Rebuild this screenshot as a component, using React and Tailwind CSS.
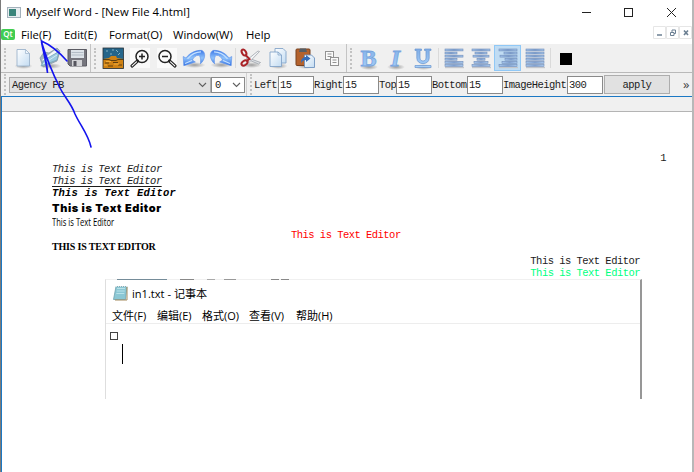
import React from "react";

const MONO = "font-['Liberation_Mono','Noto_Sans_CJK_SC',monospace] text-[10.5px] tracking-[-0.55px] whitespace-pre text-[#1c1c1c]";
const DOC = "font-['Liberation_Mono','Noto_Sans_CJK_SC',monospace] text-[10.5px] tracking-[-0.53px] whitespace-pre";
const UI = "font-['Open_Sans','Noto_Sans_CJK_SC',sans-serif] whitespace-pre";

function Handle() {
  return (
    <div className="flex w-2 shrink-0 items-center justify-center">
      <div className="h-[21px] w-0 border-l-2 border-dotted border-[#c2c2c2]" />
    </div>
  );
}

function Slot({ children, active }) {
  return (
    <div
      className={
        "flex w-[27px] shrink-0 items-center justify-center " +
        (active ? "my-[1px] border border-[#90c8f6] bg-[#c0dcf3]" : "")
      }
    >
      {children}
    </div>
  );
}

function Icon({ children }) {
  return (
    <svg width="24" height="24" viewBox="0 0 24 24" fill="none" className="shrink-0">
      {children}
    </svg>
  );
}

function Defs() {
  return (
    <svg width="0" height="0" className="absolute">
      <defs>
        <linearGradient id="page" x1="0" y1="0" x2="1" y2="1">
          <stop offset="0" stopColor="#ffffff" />
          <stop offset="1" stopColor="#c3dcf2" />
        </linearGradient>
        <linearGradient id="arrow" x1="0" y1="0" x2="0" y2="1">
          <stop offset="0" stopColor="#3a78e8" />
          <stop offset="0.5" stopColor="#8fc2fb" />
          <stop offset="1" stopColor="#2f6fe4" />
        </linearGradient>
        <linearGradient id="letter" x1="0" y1="0" x2="0" y2="1">
          <stop offset="0" stopColor="#7fade6" />
          <stop offset="1" stopColor="#a9d1fa" />
        </linearGradient>
        <linearGradient id="bar" x1="0" y1="0" x2="1" y2="0">
          <stop offset="0" stopColor="#a6c7ee" />
          <stop offset="0.5" stopColor="#7f9fce" />
          <stop offset="1" stopColor="#a9c9ee" />
        </linearGradient>
        <radialGradient id="shade">
          <stop offset="0" stopColor="#000" stopOpacity="0.35" />
          <stop offset="1" stopColor="#000" stopOpacity="0" />
        </radialGradient>
      </defs>
    </svg>
  );
}

function Shade({ cy = 20, rx = 9 }) {
  return <ellipse cx="12.5" cy={cy} rx={rx} ry="3" fill="url(#shade)" />;
}

function Zoom({ plus }) {
  return (
    <Icon>
      <rect x="2" y="2" width="20" height="20" fill="#fafafa" />
      <circle cx={plus ? 14 : 10} cy="10.5" r="6" stroke="#222" strokeWidth="1.5" />
      <path d={plus ? "M11 10.5h6M14 7.5v6" : "M7 10.5h6"} stroke="#222" strokeWidth="1.5" />
      <path
        d={plus ? "M9.5 15l-5.5 5" : "M14.5 15l5.5 5"}
        stroke="#222"
        strokeWidth="3.2"
        strokeLinecap="round"
      />
      <path
        d={plus ? "M8.5 15.9l-4.3 3.9" : "M15.5 15.9l4.3 3.9"}
        stroke="#fff"
        strokeWidth="1.1"
        strokeLinecap="round"
      />
    </Icon>
  );
}

function Arrow({ flip }) {
  return (
    <Icon>
      <Shade cy={19} rx={11} />
      <g transform={flip ? "translate(24 0) scale(-1 1)" : ""}>
        <path
          d="M1.2 10.5L4 12C8 6.5 14 4 20 4.4c4 2 3.5 9-1.6 13.4c.5-4 .2-8-2-8.5c-2.8 0-4.6 2-6 4.7l3 2L1.8 19.700z"
          fill="url(#arrow)"
          stroke="#5a8fe8"
          strokeWidth="0.6"
        />
        <path d="M5.5 12.8c4-4.8 8.5-6.9 13.5-6.9" stroke="#c4e0ff" strokeWidth="1.2" />
        <path d="M3 17.5l7-3" stroke="#c4e0ff" strokeWidth="1.2" />
      </g>
    </Icon>
  );
}

function Lines({ rows }) {
  return (
    <Icon>
      <rect x="3" y="21" width="19" height="1.2" fill="#c4c6ca" />
      {rows.map(([x, w], i) => (
        <rect
          key={i}
          x={x}
          y={3 + i * 3.1}
          width={w}
          height="1.9"
          fill="url(#bar)"
          stroke="#6f8cb9"
          strokeWidth="0.6"
        />
      ))}
    </Icon>
  );
}

const LEFT = [[3, 18], [3, 12], [3, 18], [3, 12], [3, 18], [3, 18]];
const CENTER = [[3, 18], [6, 12], [4, 16], [8, 8], [5, 14], [3, 18]];
const RIGHT = [[3, 18], [8, 13], [4, 17], [9, 12], [6, 15], [3, 18]];
const FULL = [[3, 18], [3, 18], [3, 18], [3, 18], [3, 18], [3, 18]];

function Divider() {
  return <div className="my-1 w-px shrink-0 bg-[#dadada]" />;
}

function Glyph({ children, className }) {
  return (
    <svg width="27" height="28" viewBox="0 0 27 28" fill="none" className="shrink-0">
      <ellipse cx="14" cy="23" rx="9" ry="3" fill="url(#shade)" />
      <text
        x="13.5"
        y="22"
        textAnchor="middle"
        fill="url(#letter)"
        stroke="#76a3de"
        strokeWidth="0.8"
        className={"font-['Liberation_Serif',serif] text-[24px] font-bold " + className}
      >
        {children}
      </text>
    </svg>
  );
}

function MainToolbar() {
  return (
    <div className="flex h-[29px] border-b border-[#b9b9b9] bg-[#f0f0f0]">
      <Handle />
      <Slot>
        <Icon>
          <Shade />
          <path d="M6 3.5h8.5l4 4V20H6z" fill="url(#page)" stroke="#9cb3cc" strokeWidth="0.9" />
          <path d="M14.5 3.5v4h4z" fill="#eef6fd" stroke="#9cb3cc" strokeWidth="0.7" />
        </Icon>
      </Slot>
      <Slot>
        <Icon>
          <Shade cy={20} rx={11} />
          <path d="M2 12l4-6 5 1 8-5 3 3-3 10-14 6z" fill="#a3b5bf" stroke="#7f95a1" strokeWidth="0.7" />
          <path d="M4 14L17 4l3 1L8 17z" fill="#f4f9fb" />
          <path d="M3 20l3-6L21 5.5l-2 8.5z" fill="#9ccbdf" stroke="#6f9fb4" strokeWidth="0.7" />
          <path d="M5 18l14-9" stroke="#d4ebf4" />
        </Icon>
      </Slot>
      <Slot>
        <Icon>
          <path d="M3 3.5h18.5V20H5l-2-2z" fill="#75757d" stroke="#5b5b63" />
          <rect x="6" y="4" width="13" height="8" fill="#dde3e9" />
          <path d="M6.5 6.5h12M6.5 9h12" stroke="#b3bcc6" />
          <rect x="7" y="14" width="10" height="6" fill="#d2d3d6" />
          <rect x="8.5" y="15" width="3" height="5" fill="#55555d" />
        </Icon>
      </Slot>
      <div className="w-px shrink-0 bg-[#c4c4c4]" />
      <Handle />
      <Slot>
        <Icon>
          <rect x="2" y="2" width="20.5" height="20.5" fill="#24658a" />
          <path d="M5 5h2M15 4l2 2M9 8h2M19 7l-2 2M12 3v2" stroke="#85b4c4" />
          <path d="M2 13l6-1 2-2h5l1 2 6.5 1v9.5H2z" fill="#cf8214" />
          <path d="M2 13.5h6l2 1h5l2-1h5.5M4 17h4M12 16.5h5M7 20h5M17 19h4" stroke="#61400f" />
          <path d="M5 15.5h5M13 18h5M3 19h3" stroke="#f1ad3c" />
          <rect x="2" y="2" width="20.5" height="20.5" stroke="#293239" strokeWidth="0.8" />
        </Icon>
      </Slot>
      <Slot><Zoom plus /></Slot>
      <Slot><Zoom /></Slot>
      <Slot><Arrow /></Slot>
      <Slot><Arrow flip /></Slot>
      <div className="flex w-[3px] shrink-0 justify-center"><Divider /></div>
      <Slot>
        <Icon>
          <Shade cy={19} rx={10} />
          <path d="M8 11.5L21.5 16.5l-2 1.5L7.5 13z" fill="#dce0e4" stroke="#949aa2" strokeWidth="0.7" />
          <path d="M8.5 13.5L19 5l1.5.5-10.5 11z" fill="#f3f5f7" stroke="#949aa2" strokeWidth="0.7" />
          <ellipse cx="5" cy="6.5" rx="2" ry="3.2" transform="rotate(-30 5 6.5)" stroke="#a92328" strokeWidth="2" />
          <ellipse cx="5.5" cy="17" rx="3.3" ry="2.2" transform="rotate(-35 5.5 17)" stroke="#a92328" strokeWidth="2" />
          <path d="M6.5 9l4 4-3 2" stroke="#a92328" strokeWidth="2" />
        </Icon>
      </Slot>
      <Slot>
        <Icon>
          <Shade />
          <path d="M9 2.5h8l3 3V17H9z" fill="url(#page)" stroke="#84a5c9" strokeWidth="0.9" />
          <path d="M4 6h8l3.5 3v11.5H4z" fill="url(#page)" stroke="#84a5c9" strokeWidth="0.9" />
          <path d="M12 6v3h3.5" stroke="#84a5c9" strokeWidth="0.8" />
        </Icon>
      </Slot>
      <Slot>
        <Icon>
          <Shade />
          <rect x="3" y="3" width="14" height="16.5" rx="1" fill="#b4622d" stroke="#784221" />
          <path d="M7 2.5h6l1 3.5H6z" fill="#555d65" />
          <path d="M11.5 9h7l3 3v9.5h-10z" fill="url(#page)" stroke="#6f94c0" strokeWidth="0.9" />
          <path d="M8 17c0-4 2-6 5-6V9l4.500 3.500L13 16v-2c-2 0-4 1-5 3z" fill="#356cb8" />
        </Icon>
      </Slot>
      <Slot>
        <Icon>
          <rect x="5.5" y="5.5" width="8" height="8" fill="#fafafa" stroke="#929292" />
          <path d="M7.5 8h4M7.5 10.5h4" stroke="#929292" />
          <rect x="10.5" y="11.5" width="8" height="8" fill="#fafafa" stroke="#929292" />
          <path d="M12.5 14h4M12.5 16.5h4" stroke="#929292" />
        </Icon>
      </Slot>
      <div className="flex w-0.5 shrink-0 justify-end">
        <div className="w-px bg-[#c4c4c4]" />
      </div>
      <Handle />
      <Slot><Glyph className="">B</Glyph></Slot>
      <Slot><Glyph className="italic">I</Glyph></Slot>
      <Slot>
        <Icon>
          <Shade cy={21} rx={9} />
          <path
            d="M4 3h6.5v1.5H9V12c0 4 6 4 6 0V4.5h-1.5V3H20v1.5h-1.8V12c0 7.5-12.4 7.5-12.4 0V4.5H4zM4 19.5h16v2H4z"
            fill="url(#letter)"
            stroke="#6c97d0"
            strokeWidth="0.7"
          />
        </Icon>
      </Slot>
      <div className="flex w-1 shrink-0 justify-center"><Divider /></div>
      <Slot><Lines rows={LEFT} /></Slot>
      <Slot><Lines rows={CENTER} /></Slot>
      <Slot active><Lines rows={RIGHT} /></Slot>
      <Slot><Lines rows={FULL} /></Slot>
      <div className="flex w-1 shrink-0 justify-center"><Divider /></div>
      <Slot><div className="mt-px h-3 w-3 bg-black" /></Slot>
    </div>
  );
}

function Chevron() {
  return (
    <svg width="9" height="6" viewBox="0 0 9 6" fill="none" className="shrink-0">
      <path d="M1 1l3.5 3.5L8 1" stroke="#606060" strokeWidth="1.1" />
    </svg>
  );
}

function Field({ label, value, labelWidth }) {
  return (
    <>
      <span className={MONO + " mt-[2px] shrink-0 " + labelWidth}>{label}</span>
      <div className={MONO + " flex h-[18px] w-9 shrink-0 items-center border border-[#8a8a8a] bg-white pt-0.5 pl-px"}>
        {value}
      </div>
    </>
  );
}

function FormatToolbar() {
  return (
    <div className="flex h-[23px] items-center bg-[#f0f0f0]">
      <Handle />
      <div className={MONO + " flex h-4 w-[202px] shrink-0 items-center justify-between border border-[#adadad] bg-[#e1e1e1] pr-[3px] pl-[2px]"}>
        <span className="pt-0.5">Agency FB</span>
        <Chevron />
      </div>
      <div className={MONO + " flex h-4 w-[34px] shrink-0 items-center justify-between border border-[#8a8a8a] bg-white pr-[3px] pl-[3px]"}>
        <span className="pt-0.5">0</span>
        <Chevron />
      </div>
      <div className="ml-px h-full w-px shrink-0 bg-[#d0d0d0]" />
      <Handle />
      <Field label="Left" value="15" labelWidth="w-[24px] ml-[-1px]" />
      <Field label="Right" value="15" labelWidth="w-[29px]" />
      <Field label="Top" value="15" labelWidth="w-[17px]" />
      <Field label="Bottom" value="15" labelWidth="w-[35px]" />
      <Field label="ImageHeight" value="300" labelWidth="w-[64px]" />
      <div className={MONO + " ml-px flex h-[19px] w-[66px] shrink-0 items-center justify-center border border-[#adadad] bg-[#e1e1e1] pt-0.5"}>
        apply
      </div>
      <span className={UI + " ml-[13px] text-[13px] leading-none text-[#444]"}>»</span>
    </div>
  );
}

function TitleBar() {
  return (
    <div className="flex h-6 items-center bg-white pl-1.5">
      <div className="flex h-[11px] w-[14px] shrink-0 border border-[#a3b1bb] bg-[#e7edf0] p-px">
        <div className="w-[7px] bg-[#3a857b]" />
      </div>
      <span className={UI + " ml-[5px] w-[547px] shrink-0 text-[11.3px] leading-6"}>Myself Word - [New File 4.html]</span>
      <svg width="110" height="12" viewBox="0 0 110 12" fill="none" stroke="#222" className="-mt-px shrink-0">
        <path d="M9 6.5h9" />
        <rect x="51.5" y="2.5" width="8" height="8" />
        <path d="M94 2l9 9M103 2l-9 9" />
      </svg>
    </div>
  );
}

function MenuBar() {
  return (
    <div className="flex h-5 items-center bg-white">
      <div className="flex h-[11px] w-[14px] shrink-0 items-center justify-center rounded-[2px] bg-[#41cd52] font-['Open_Sans',sans-serif] text-[8px] leading-none font-semibold text-white">
        Qt
      </div>
      <div className={UI + " flex pt-0.5 text-[11.3px] leading-[18px]"}>
        <span className="ml-[6px] w-[43px]">File(F)</span>
        <span className="w-[45px]">Edit(E)</span>
        <span className="w-[64px]">Format(O)</span>
        <span className="w-[73px]">Window(W)</span>
        <span className="w-[30px]">Help</span>
      </div>
      <svg width="39" height="13" viewBox="0 0 39 13" fill="none" className="-mt-[3px] ml-auto shrink-0">
        <path d="M.5.5h12v12H.5zM13.5.5h12v12h-12zM26.5.5h12v12h-12z" fill="#fff" stroke="#e6e6e6" />
        <path d="M4 9h5" stroke="#6b7f92" strokeWidth="1.5" />
        <path d="M17.5 6.5h3.5v3h-3.5zM19 6V4h3.5v3.5H21" stroke="#6b7f92" />
        <path d="M31 4.5l4 4.5M35 4.5L31 9" stroke="#6b7f92" strokeWidth="1.6" />
      </svg>
    </div>
  );
}

function NotepadShot() {
  return (
    <div className="ml-[103px] flex h-[120px] w-[537px] flex-col border-t border-r-2 border-l border-t-[#f0f0f0] border-r-[#979797] border-l-[#dedede] bg-white">
      <div className="-mt-px flex h-px">
        <div className="ml-[11px] w-[50px] bg-[#758c99]" />
        <div className="ml-[13px] w-[14px] bg-[#888]" />
        <div className="ml-[13px] w-[8px] bg-[#aaa]" />
        <div className="ml-[9px] w-[12px] bg-[#999]" />
        <div className="ml-[35px] w-[8px] bg-[#888]" />
        <div className="ml-[2px] w-[8px] bg-[#888]" />
      </div>
      <div className="flex h-[27px] items-center pl-[7px]">
        <svg width="15" height="16" viewBox="0 0 15 16" fill="none" className="-mt-px shrink-0">
          <path d="M3 1.5h11L12.5 14.5h-12z" fill="#8bc7d4" stroke="#6fa1ad" strokeWidth="0.8" />
          <path d="M4 3.5h8M3.7 6h8M3.3 8.5h8" stroke="#b9e2e9" />
          <path d="M14 2v13H2" stroke="#a58c5e" />
          <path d="M3 1.5h11" stroke="#dde5e7" strokeDasharray="1 1" />
        </svg>
        <span className={UI + " ml-[4px] text-[11.1px] leading-none"}>in1.txt - 记事本</span>
      </div>
      <div className={UI + " flex h-[17px] items-center border-b border-[#ededed] pl-[6px] text-[11px] leading-none"}>
        <span className="w-[45px]">文件(F)</span>
        <span className="w-[45px]">编辑(E)</span>
        <span className="w-[47px]">格式(O)</span>
        <span className="w-[47px]">查看(V)</span>
        <span>帮助(H)</span>
      </div>
      <div className="mt-[8px] ml-[4px] h-2 w-2 border border-[#444]" />
      <div className="mt-[4px] ml-[16px] h-[20px] w-px bg-black" />
    </div>
  );
}

function Page() {
  return (
    <div className="flex flex-1 flex-col border-t border-[#b4b4b4] bg-white">
      <div className={DOC + " mt-[40px] h-[11px] pr-[26px] text-right leading-[12px] text-[#1c1c1c]"}>1</div>
      <div className={DOC + " h-3 pl-[50px] leading-[12px] text-[#1c1c1c] italic"}>This is Text Editor</div>
      <div className={DOC + " h-3 pl-[50px] leading-[12px] text-[#1c1c1c] italic underline underline-offset-2"}>This is Text Editor</div>
      <div className={DOC + " h-[13px] pl-[50px] leading-[12px] font-bold italic"}>
        <span className="tracking-[0.23px]">This is Text Editor</span>
      </div>
      <div className="h-4 pl-[50px] font-['Inter',sans-serif] text-[11px] leading-4 font-black tracking-[0.6px] whitespace-pre">
        This is Text Editor
      </div>
      <div className="h-3 pl-[50px] font-['Open_Sans',sans-serif] text-[10px] leading-3 whitespace-pre">
        <span className="inline-block origin-left scale-x-[0.76]">This is Text Editor</span>
      </div>
      <div className={DOC + " h-3 pl-[289px] leading-[14px] text-[#ff0000]"}>This is Text Editor</div>
      <div className="h-[14px] pl-[50px] font-['Liberation_Serif',serif] text-[10px] leading-[14px] font-bold tracking-[-0.18px] whitespace-pre">
        THIS IS TEXT EDITOR
      </div>
      <div className={DOC + " h-3 pr-[52px] text-right leading-[14px] text-[#1c1c1c]"}>This is Text Editor</div>
      <div className={DOC + " h-[13px] pr-[52px] text-right leading-[14px] text-[#00ff7f]"}>This is Text Editor</div>
      <NotepadShot />
    </div>
  );
}

export default function App() {
  return (
    <div className="relative flex h-[472px] w-[694px] flex-col overflow-hidden border-r-2 border-l border-r-[#b8b8b8] border-l-[#7b7b7b] bg-white text-black">
      <Defs />
      <TitleBar />
      <MenuBar />
      <MainToolbar />
      <FormatToolbar />
      <div className="-mr-px flex flex-1 flex-col border-t border-r border-l border-[#1b78c4]">
        <div className="h-[14px] bg-[#f0f0f0]" />
        <Page />
      </div>
      <svg className="pointer-events-none absolute top-0 -left-px" width="120" height="160" viewBox="0 0 120 160" fill="none">
        <path
          d="M67 61C60 53 53 46 41.5 41C43 50 47 61 47.5 73C46 61 43 50 41.5 42C46 57 52 72 60 88C65 98 71 103 75 114C80 125 88 134 91 147"
          stroke="#1414ee"
          strokeWidth="1.6"
          strokeLinecap="round"
        />
      </svg>
    </div>
  );
}
